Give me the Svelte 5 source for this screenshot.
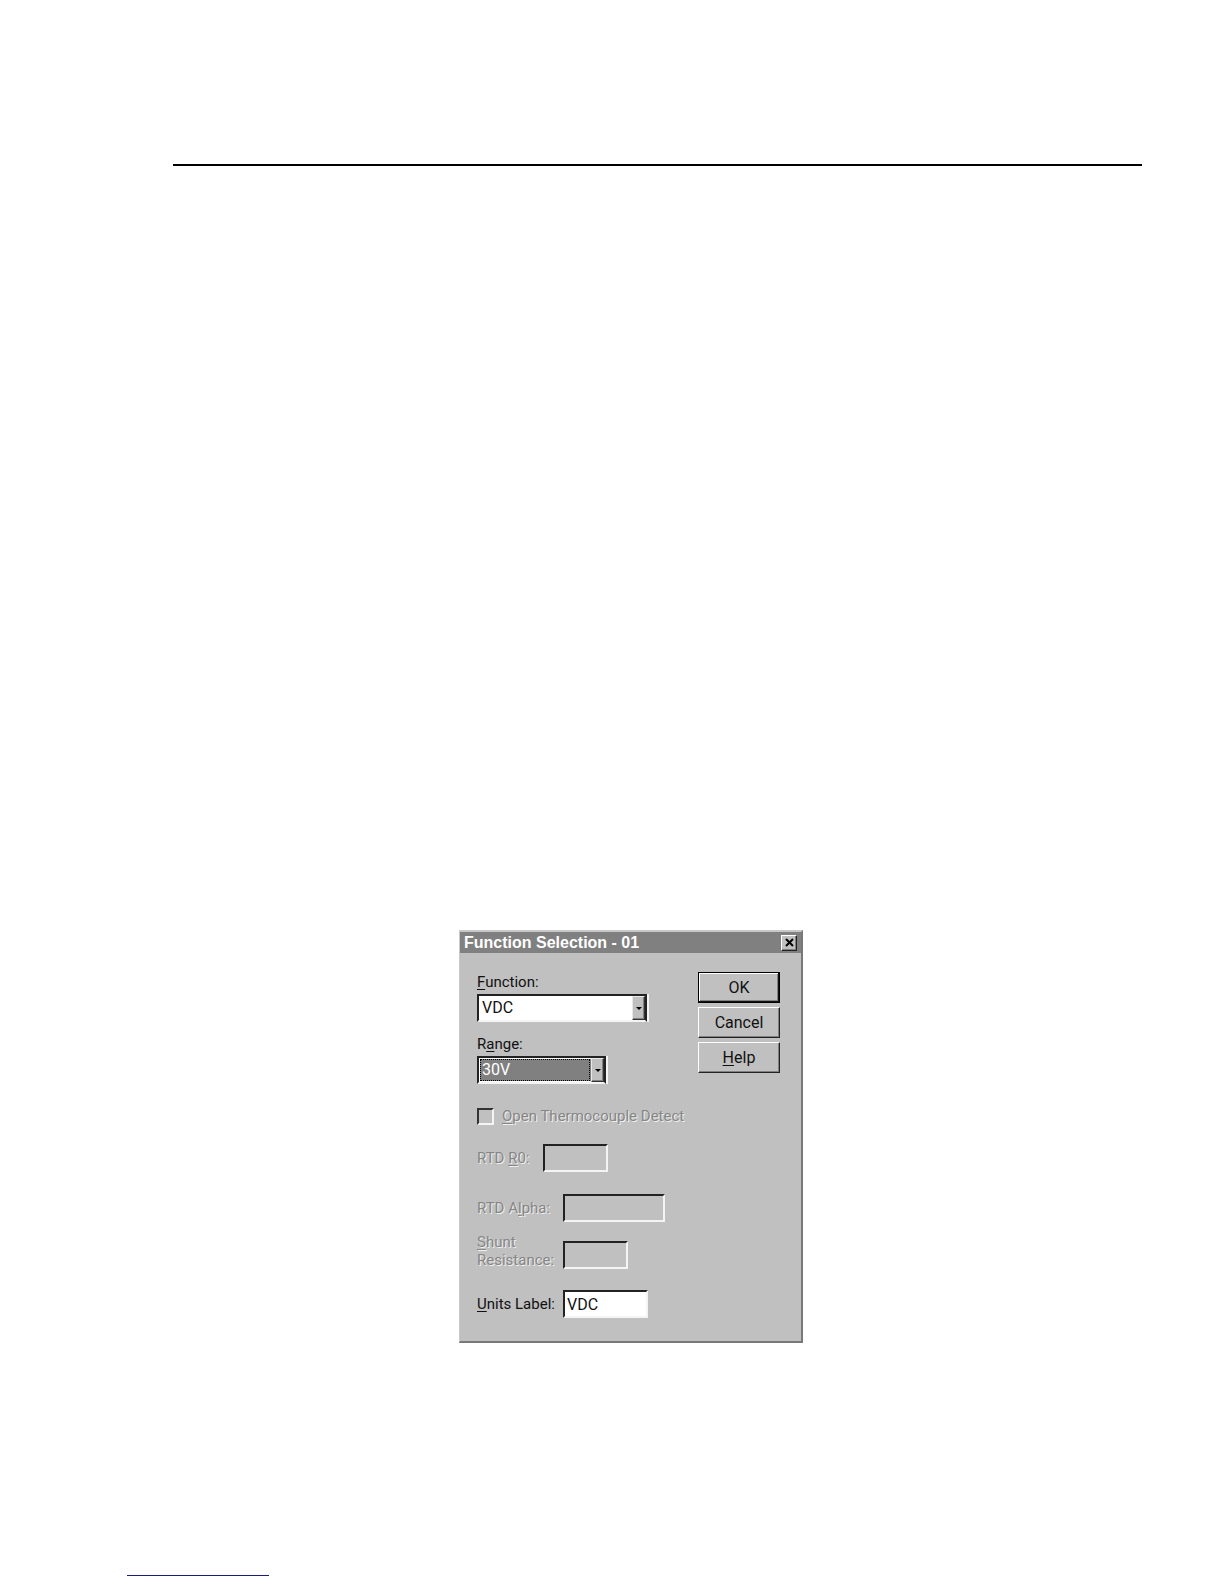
<script>
	let func = $state('VDC');
	let range = $state('30V');
	let units = $state('VDC');
	let openDetect = $state(false);

	const functions = ['VDC', 'VAC', 'Ohms', 'Frequency', 'RTD', 'Thermocouple'];
	const ranges = ['300mV', '3V', '30V', '300V', 'Auto'];
</script>

<main class="page">
	<hr class="rule" />

	<form class="dialog" onsubmit={(e) => e.preventDefault()}>
		<header class="titlebar">
			<h1>Function Selection - 01</h1>
			<button type="button" class="close" aria-label="Close">
				<svg width="9" height="9" viewBox="0 0 9 9">
					<path d="M1 1 L8 8 M8 1 L1 8" stroke="#000" stroke-width="2" />
				</svg>
			</button>
		</header>

		<div class="body">
			<div class="fields">
				<label for="function"><u>F</u>unction:</label>
				<div class="combo wide">
					<select id="function" bind:value={func}>
						{#each functions as f}
							<option>{f}</option>
						{/each}
					</select>
					<span class="arrow"></span>
				</div>

				<label class="second" for="range">R<u>a</u>nge:</label>
				<div class="combo narrow active">
					<select id="range" bind:value={range}>
						{#each ranges as r}
							<option>{r}</option>
						{/each}
					</select>
					<span class="arrow"></span>
				</div>

				<div class="check off">
					<input id="otd" type="checkbox" bind:checked={openDetect} disabled />
					<label for="otd"><u>O</u>pen Thermocouple Detect</label>
				</div>

				<div class="row rtd off">
					<label for="r0">RTD <u>R</u>0:</label>
					<input id="r0" class="small" type="text" disabled />
				</div>

				<div class="row alpha off">
					<label for="alpha">RTD A<u>l</u>pha:</label>
					<input id="alpha" class="large" type="text" disabled />
				</div>

				<div class="row shunt off">
					<label for="shunt"><u>S</u>hunt<br />Resistance:</label>
					<input id="shunt" class="small" type="text" disabled />
				</div>

				<div class="row units">
					<label for="units"><u>U</u>nits Label:</label>
					<input id="units" class="medium" type="text" bind:value={units} />
				</div>
			</div>

			<div class="buttons">
				<button type="submit" class="default">OK</button>
				<button type="button">Cancel</button>
				<button type="button"><u>H</u>elp</button>
			</div>
		</div>
	</form>

	<hr class="footline" />
</main>

<style>
	:global(body) {
		margin: 0;
		background: #fff;
	}

	.page {
		box-sizing: border-box;
		min-height: 100vh;
		display: flex;
		flex-direction: column;
		padding: 164px 82px 8px 127px;
		font-family: Roboto, 'Liberation Sans', Arial, sans-serif;
		font-size: 16px;
		line-height: 20px;
		color: #111;
	}

	hr {
		margin: 0;
		border: 0;
	}

	.rule {
		height: 2px;
		margin-left: 46px;
		background: #000;
	}

	.footline {
		width: 142px;
		height: 1px;
		margin-top: auto;
		background: #1c1c7c;
	}

	.dialog {
		box-sizing: border-box;
		width: 344px;
		margin: 764px 0 0 332px;
		background: #c0c0c0;
		border-style: solid;
		border-width: 2px 2px 2px 1px;
		border-color: #c8c8c8 #787878 #787878 #c8c8c8;
	}

	.titlebar {
		display: flex;
		align-items: center;
		justify-content: space-between;
		height: 21px;
		padding: 0 4px;
		background: #808080;
	}

	h1 {
		margin: 0;
		font-family: 'Liberation Sans', Arial, sans-serif;
		font-size: 16px;
		font-weight: bold;
		line-height: 20px;
		color: #fff;
	}

	button {
		box-sizing: border-box;
		padding: 0;
		font: inherit;
		color: #111;
		background: #c0c0c0;
		border: 1px solid;
		border-color: #fff #222 #222 #fff;
		box-shadow: inset -1px -1px #808080;
	}

	.close {
		display: flex;
		align-items: center;
		justify-content: center;
		width: 16px;
		height: 16px;
	}

	.body {
		display: flex;
		justify-content: space-between;
		padding: 19px 21px 23px 17px;
	}

	.buttons {
		display: flex;
		flex-direction: column;
		gap: 4px;
		width: 82px;
	}

	.buttons button {
		height: 31px;
	}

	.buttons .default {
		border: 1px solid #000;
		box-shadow: inset -1px -1px #111, inset 1px 1px #fff, inset -2px -2px #808080;
	}

	label {
		display: block;
		font-size: 15px;
		white-space: nowrap;
	}

	u {
		text-underline-offset: 2px;
		text-decoration-thickness: 1px;
		text-decoration-skip-ink: none;
	}

	.second {
		margin-top: 12px;
	}

	.combo {
		position: relative;
		margin-top: 2px;
	}

	.wide {
		width: 170px;
	}

	.narrow {
		width: 129px;
	}

	select,
	input[type='text'] {
		box-sizing: border-box;
		display: block;
		height: 28px;
		margin: 0;
		font: inherit;
		color: #111;
		background: #fff;
		border: 2px solid;
		border-color: #222 #f4f4f4 #f4f4f4 #222;
		border-radius: 0;
		outline: none;
	}

	select {
		appearance: none;
		width: 100%;
		padding: 0 16px 0 3px;
		border-right-color: #222;
		box-shadow: 2px 0 #f4f4f4;
	}

	.active select {
		color: #fff;
		background: #808080;
		box-shadow: inset 0 0 0 1px #fff, 2px 0 #f4f4f4;
	}

	/* dotted focus frame around the chosen value */
	.active::after {
		content: '';
		position: absolute;
		inset: 3px 16px 3px 3px;
		border: 1px dotted #000;
		pointer-events: none;
	}

	.arrow {
		box-sizing: border-box;
		position: absolute;
		top: 2px;
		right: 2px;
		bottom: 2px;
		display: flex;
		align-items: center;
		justify-content: center;
		width: 13px;
		background: #c0c0c0;
		border: 1px solid;
		border-color: #e8e8e8 #333 #333 #e8e8e8;
		box-shadow: inset -1px -1px #808080;
		pointer-events: none;
	}

	.arrow::before {
		content: '';
		border: 3px solid transparent;
		border-top-color: #000;
		border-bottom: 0;
	}

	.check {
		display: flex;
		align-items: center;
		gap: 8px;
		height: 20px;
		margin-top: 22px;
	}

	.check input {
		box-sizing: border-box;
		appearance: none;
		width: 17px;
		height: 17px;
		margin: 0;
		border: 2px solid;
		border-color: #333 #f4f4f4 #f4f4f4 #333;
	}

	.off label {
		color: #868686;
		text-shadow: 1px 1px #f0f0f0;
	}

	.row {
		display: grid;
		grid-template-columns: 86px auto;
		justify-content: start;
		align-items: center;
	}

	.rtd {
		grid-template-columns: 66px auto;
		margin-top: 18px;
	}

	.alpha {
		margin-top: 22px;
	}

	.shunt {
		align-items: end;
		margin-top: 11px;
	}

	.shunt label {
		line-height: 18px;
	}

	.units {
		margin-top: 21px;
	}

	input[type='text'] {
		padding: 0 2px;
	}

	input[type='text']:disabled {
		background: #c0c0c0;
	}

	.small {
		width: 65px;
	}

	.medium {
		width: 85px;
	}

	.large {
		width: 102px;
	}
</style>
